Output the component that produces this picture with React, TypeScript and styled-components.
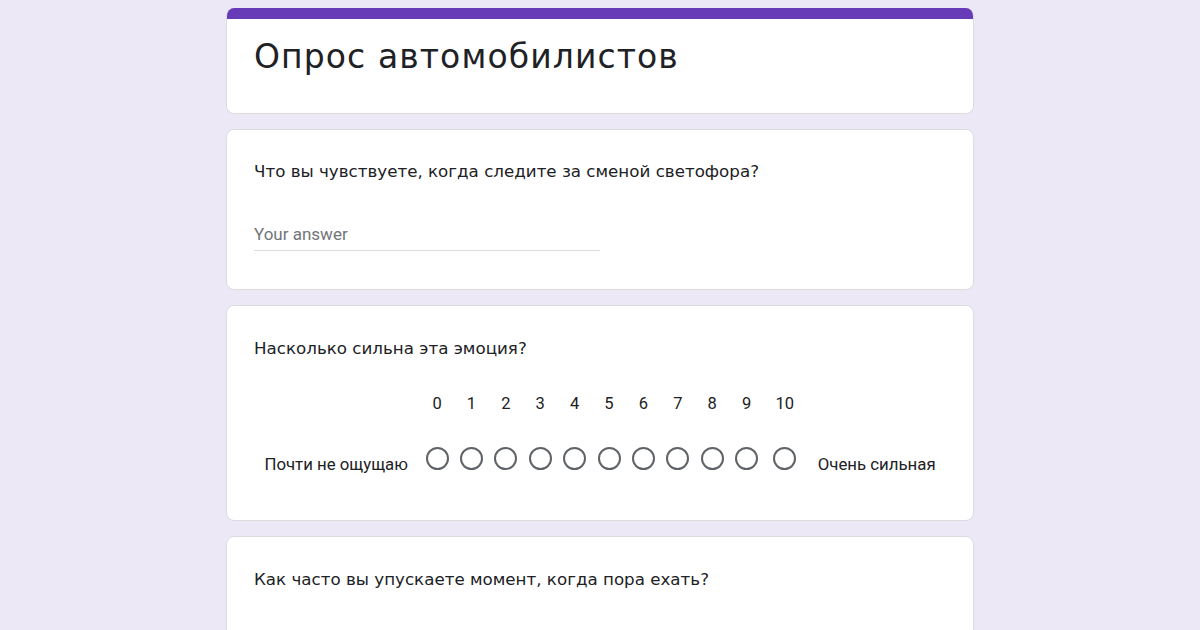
import React from "react";
import styled, { createGlobalStyle } from "styled-components";

const GlobalStyle = createGlobalStyle`
  html, body {
    margin: 0;
    padding: 0;
    background: #ede8f6;
  }
  body {
    font-family: "Roboto", "Liberation Sans", sans-serif;
    color: #202124;
  }
`;

const Page = styled.div`
  min-height: 630px;
  background: #ede8f6;
  display: flex;
  flex-direction: column;
  align-items: center;
  gap: 15px;
  padding-top: 8px;
`;

const Card = styled.section<{ $pt?: number; $pb?: number; $minH?: number }>`
  width: 748px;
  box-sizing: border-box;
  background: #fff;
  border: 1px solid #dadce0;
  border-radius: 8px;
  padding: ${(p) => p.$pt ?? 29}px 27px ${(p) => p.$pb ?? 24}px;
  min-height: ${(p) => (p.$minH ? `${p.$minH}px` : "auto")};
  display: flex;
  flex-direction: column;
`;

const HeaderCard = styled.header`
  width: 748px;
  box-sizing: border-box;
  background: #fff;
  border: 1px solid #dadce0;
  border-top: none;
  border-radius: 8px;
  overflow: hidden;
  display: flex;
  flex-direction: column;
`;

const AccentBar = styled.div`
  height: 11px;
  background: #673ab7;
  margin: 0 -1px;
`;

const Title = styled.h1`
  margin: 0;
  padding: 18px 27px 36px;
  font-family: "DejaVu Sans", "Open Sans", sans-serif;
  font-weight: 400;
  font-size: 33px;
  letter-spacing: 1.1px;
  line-height: 40px;
  color: #202124;
`;

const Question = styled.div`
  font-family: "DejaVu Sans", "Open Sans", sans-serif;
  font-size: 16.7px;
  line-height: 24px;
  color: #202124;
`;

const AnswerField = styled.div`
  margin-top: 39px;
  width: 346px;
  padding-bottom: 4px;
  border-bottom: 1px solid #dadce0;
  font-family: "Roboto", sans-serif;
  font-size: 17px;
  line-height: 24px;
  color: #70757a;
`;

const ScaleRow = styled.div`
  margin-top: 34px;
  display: flex;
  justify-content: center;
  align-items: flex-end;
`;

const ScaleLabel = styled.div<{ $side: "left" | "right" }>`
  font-family: "Roboto", sans-serif;
  font-size: 16.8px;
  line-height: 20px;
  color: #202124;
  margin-${(p) => (p.$side === "left" ? "right" : "left")}: 12px;
  white-space: nowrap;
`;

const ScaleColumn = styled.div<{ $wide?: boolean }>`
  width: ${(p) => (p.$wide ? 42 : 34.4)}px;
  display: flex;
  flex-direction: column;
  align-items: center;
  padding-bottom: 4px;
`;

const ScaleNumber = styled.div`
  font-family: "Roboto", sans-serif;
  font-size: 16.5px;
  line-height: 20px;
  color: #202124;
  margin-bottom: 33px;
`;

const Radio = styled.div`
  width: 23px;
  height: 23px;
  box-sizing: border-box;
  border: 2px solid #5f6368;
  border-radius: 50%;
`;

const values = [0, 1, 2, 3, 4, 5, 6, 7, 8, 9, 10];

export default function App() {
  return (
    <>
      <GlobalStyle />
      <Page>
        <HeaderCard>
          <AccentBar />
          <Title>Опрос автомобилистов</Title>
        </HeaderCard>

        <Card $pt={29} $pb={38}>
          <Question>Что вы чувствуете, когда следите за сменой светофора?</Question>
          <AnswerField>Your answer</AnswerField>
        </Card>

        <Card $pt={30} $pb={46}>
          <Question>Насколько сильна эта эмоция?</Question>
          <ScaleRow>
            <ScaleLabel $side="left">Почти не ощущаю</ScaleLabel>
            {values.map((v) => (
              <ScaleColumn key={v} $wide={v === 10}>
                <ScaleNumber>{v}</ScaleNumber>
                <Radio />
              </ScaleColumn>
            ))}
            <ScaleLabel $side="right">Очень сильная</ScaleLabel>
          </ScaleRow>
        </Card>

        <Card $pt={30} $minH={150}>
          <Question>Как часто вы упускаете момент, когда пора ехать?</Question>
        </Card>
      </Page>
    </>
  );
}
